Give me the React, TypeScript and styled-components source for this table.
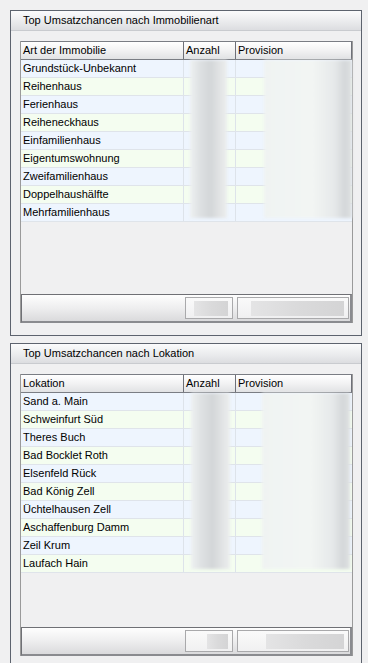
import styled, { createGlobalStyle } from 'styled-components';

const Global = createGlobalStyle`
    body {
        margin: 0;
        background: #f0f0f1;
        font-family: "Liberation Sans", Arial, sans-serif;
        font-size: 11px;
        color: #000;
    }
`;

const Page = styled.div`
    padding: 10px 6px 0 10px;
    display: flex;
    flex-direction: column;
    gap: 7px;
    height: 663px;
    box-sizing: border-box;
    overflow: hidden;
`;

const Panel = styled.section`
    border: 1px solid #5d636e;
    background: #f0f0f1;
    display: flex;
    flex-direction: column;
    flex-shrink: 0;
`;

const PanelTitle = styled.div`
    height: 19px;
    line-height: 19px;
    padding-left: 12px;
    background: linear-gradient(#fbfbfc, #e9eaec 60%, #dcdde0);
    border-bottom: 1px solid #c9cbcf;
    white-space: nowrap;
`;

const PanelBody = styled.div`
    padding: 10px 8px 12px 9px;
`;

const GridFrame = styled.div`
    height: 282px;
    border-left: 1px solid #9a9a9a;
    border-right: 1px solid #9a9a9a;
    display: flex;
    flex-direction: column;
    box-sizing: border-box;
`;

const cols = '162px 52px 1fr';

const HeadRow = styled.div`
    display: grid;
    grid-template-columns: ${cols};
    height: 19px;
    border-top: 1px solid #7a7d84;
    border-bottom: 1px solid #7a7d84;
    border-right: 1px solid #6e7078;
    background: linear-gradient(#ffffff, #f2f2f3 50%, #e1e2e4);
    box-sizing: border-box;
`;

const HeadCell = styled.div`
    line-height: 17px;
    padding-left: 2px;
    border-left: ${(p: { $first?: boolean }) => (p.$first ? 'none' : '1px solid #6e7078')};
    white-space: nowrap;
    overflow: hidden;
`;

const Body = styled.div`
    position: relative;
    flex: 1;
`;

const Row = styled.div<{ $even: boolean }>`
    display: grid;
    grid-template-columns: ${cols};
    height: 18px;
    background: ${(p) => (p.$even ? '#f4fdf0' : '#eef5fe')};
    border-bottom: 1px solid #dfe4ea;
    box-sizing: border-box;
`;

const Cell = styled.div<{ $first?: boolean }>`
    line-height: 17px;
    padding-left: 2px;
    border-left: ${(p) => (p.$first ? 'none' : '1px solid #dde3ea')};
    white-space: nowrap;
    overflow: hidden;
`;

// blurred figures lying over the numeric columns
const Smudge = styled.div<{ $left: number; $width: number; $height: number; $soft?: boolean }>`
    position: absolute;
    top: 0;
    left: ${(p) => p.$left}px;
    width: ${(p) => p.$width}px;
    height: ${(p) => p.$height}px;
    background: ${(p) =>
        p.$soft
            ? 'linear-gradient(90deg, #eff3f2 0%, #f2f5f3 55%, #e6e9ea 80%, #d4d7d9 92%, #dfe2e3 100%)'
            : 'linear-gradient(90deg, #eef1f1 0%, #dcdfe1 30%, #d3d6d8 55%, #e4e6e7 85%, #eceeee 100%)'};
    filter: blur(1.5px);
`;

const Footer = styled.div`
    margin-top: auto;
    height: 29px;
    border: 1px solid #6f7075;
    border-right-width: 2px;
    border-bottom-width: 2px;
    border-right-color: #8a8b8f;
    border-bottom-color: #8a8b8f;
    background: linear-gradient(#fefefe, #eeeeef 50%, #dadadc);
    display: flex;
    justify-content: flex-end;
    align-items: center;
    gap: 4px;
    padding-right: 1px;
    box-sizing: border-box;
`;

const FooterButton = styled.div<{ $width: number; $justify: string }>`
    width: ${(p) => p.$width}px;
    height: 22px;
    border: 1px solid #a9a9ab;
    background: linear-gradient(#fafafa, #f0f0f1);
    box-sizing: border-box;
    display: flex;
    align-items: center;
    justify-content: ${(p) => p.$justify};
    padding: 0 4px 0 8px;
`;

const Blot = styled.div<{ $width: number }>`
    width: ${(p) => p.$width}px;
    height: 15px;
    background: linear-gradient(90deg, #e4e4e5, #dadadb 50%, #d4d4d5);
    filter: blur(0.6px);
`;

type Grid = {
    title: string;
    label: string;
    rows: string[];
    smudge: [number, number, number, number];
    blots: [number, number];
};

const grids: Grid[] = [
    {
        title: 'Top Umsatzchancen nach Immobilienart',
        label: 'Art der Immobilie',
        rows: [
            'Grundstück-Unbekannt',
            'Reihenhaus',
            'Ferienhaus',
            'Reiheneckhaus',
            'Einfamilienhaus',
            'Eigentumswohnung',
            'Zweifamilienhaus',
            'Doppelhaushälfte',
            'Mehrfamilienhaus',
        ],
        smudge: [169, 37, 243, 88],
        blots: [35, 93],
    },
    {
        title: 'Top Umsatzchancen nach Lokation',
        label: 'Lokation',
        rows: [
            'Sand a. Main',
            'Schweinfurt Süd',
            'Theres Buch',
            'Bad Bocklet Roth',
            'Elsenfeld Rück',
            'Bad König Zell',
            'Üchtelhausen Zell',
            'Aschaffenburg Damm',
            'Zeil Krum',
            'Laufach Hain',
        ],
        smudge: [170, 39, 241, 88],
        blots: [21, 78],
    },
];

function Table(props: { grid: Grid }) {
    const { grid } = props;
    const h = grid.rows.length * 18 - 4;

    return (
        <Panel>
            <PanelTitle>{grid.title}</PanelTitle>
            <PanelBody>
                <GridFrame>
                    <HeadRow>
                        <HeadCell $first>{grid.label}</HeadCell>
                        <HeadCell>Anzahl</HeadCell>
                        <HeadCell>Provision</HeadCell>
                    </HeadRow>
                    <Body>
                        {grid.rows.map((name, i) => (
                            <Row key={name} $even={i % 2 === 1}>
                                <Cell $first>{name}</Cell>
                                <Cell />
                                <Cell />
                            </Row>
                        ))}
                        <Smudge $left={grid.smudge[0]} $width={grid.smudge[1]} $height={h} />
                        <Smudge $left={grid.smudge[2]} $width={grid.smudge[3]} $height={h} $soft />
                    </Body>
                    <Footer>
                        <FooterButton $width={48} $justify={grid.blots[0] > 30 ? 'center' : 'flex-end'}>
                            <Blot $width={grid.blots[0]} />
                        </FooterButton>
                        <FooterButton $width={112} $justify="flex-end">
                            <Blot $width={grid.blots[1]} />
                        </FooterButton>
                    </Footer>
                </GridFrame>
            </PanelBody>
        </Panel>
    );
}

export default function App() {
    return (
        <Page>
            <Global />
            {grids.map((g) => (
                <Table key={g.title} grid={g} />
            ))}
        </Page>
    );
}
